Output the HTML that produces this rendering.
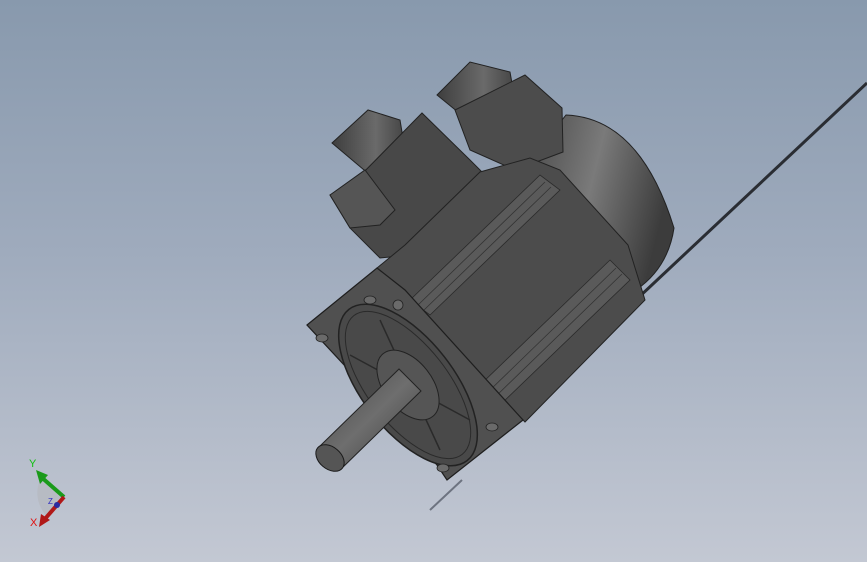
<!DOCTYPE html>
<html><head><style>
html,body{margin:0;padding:0;}
body{width:867px;height:562px;overflow:hidden;background:linear-gradient(180deg,#8899ad 0%,#9fabbd 45%,#c3c8d3 100%);font-family:"Liberation Sans",sans-serif;}
svg{position:absolute;left:0;top:0;}
</style></head><body>
<svg width="867" height="562" viewBox="0 0 867 562">
<defs>
<linearGradient id="enc" x1="0" y1="0" x2="1" y2="0.3">
<stop offset="0" stop-color="#4a4a4a"/><stop offset="0.5" stop-color="#7a7a7a"/><stop offset="1" stop-color="#3c3c3c"/>
</linearGradient>
<linearGradient id="sh" x1="0" y1="0" x2="1" y2="1">
<stop offset="0" stop-color="#454545"/><stop offset="0.5" stop-color="#6e6e6e"/><stop offset="1" stop-color="#3a3a3a"/>
</linearGradient>
<linearGradient id="cyl" x1="0" y1="0" x2="1" y2="0">
<stop offset="0" stop-color="#3e3e3e"/><stop offset="0.6" stop-color="#6a6a6a"/><stop offset="1" stop-color="#444"/>
</linearGradient>
</defs>
<line x1="867" y1="83" x2="638" y2="298" stroke="#2a2d33" stroke-width="3"/>
<line x1="430" y1="510" x2="462" y2="480" stroke="#6d7380" stroke-width="2"/>
<path d="M530,160 L566,115 Q640,118 674,228 Q668,268 636,290 L600,248 Z" fill="url(#enc)" stroke="#222" stroke-width="1"/>
<path d="M437,95 L470,62 L510,72 L515,100 L480,130 Z" fill="url(#cyl)" stroke="#222"/>
<path d="M455,110 L525,75 L562,108 L563,152 L515,170 L470,150 Z" fill="#4c4c4c" stroke="#222"/>
<path d="M332,143 L368,110 L400,120 L405,150 L370,175 Z" fill="url(#cyl)" stroke="#222"/>
<path d="M330,195 L356,180 L422,113 L470,160 L482,172 L400,256 L380,258 L350,228 Z" fill="#484848" stroke="#222"/>
<path d="M330,195 L350,228 L380,225 L395,210 L365,170 Z" fill="#555" stroke="#222"/>
<path d="M377,268 L405,245 L480,172 L530,158 L560,170 L628,245 L645,300 L525,422 Z" fill="#4c4c4c" stroke="#222"/>
<path d="M410,300 L540,175 L560,190 L430,315 Z" fill="#5a5a5a" stroke="#2a2a2a" stroke-width="0.8"/>
<path d="M480,385 L610,260 L630,280 L500,405 Z" fill="#5a5a5a" stroke="#2a2a2a" stroke-width="0.8"/>
<g stroke="#333" stroke-width="0.8">
<line x1="418" y1="305" x2="545" y2="182"/><line x1="424" y1="310" x2="551" y2="187"/>
<line x1="488" y1="392" x2="616" y2="268"/><line x1="494" y1="398" x2="622" y2="274"/>
</g>
<path d="M307,325 L377,268 L405,290 L523,420 L447,480 L437,465 Z" fill="#505050" stroke="#1e1e1e" stroke-width="1.2"/>
<ellipse cx="408" cy="385" rx="96" ry="46" transform="rotate(52 408 385)" fill="#494949" stroke="#222" stroke-width="1.5"/>
<ellipse cx="408" cy="385" rx="88" ry="40" transform="rotate(52 408 385)" fill="none" stroke="#2a2a2a" stroke-width="1"/>
<line x1="350" y1="355" x2="470" y2="420" stroke="#2a2a2a" stroke-width="1.5"/>
<line x1="380" y1="320" x2="440" y2="450" stroke="#2a2a2a" stroke-width="1.5"/>
<ellipse cx="408" cy="385" rx="40" ry="24" transform="rotate(52 408 385)" fill="#555" stroke="#222"/>
<g fill="#6a6a6a" stroke="#222" stroke-width="0.8">
<ellipse cx="370" cy="300" rx="6" ry="4"/><ellipse cx="322" cy="338" rx="6" ry="4"/>
<ellipse cx="492" cy="427" rx="6" ry="4"/><ellipse cx="443" cy="468" rx="6" ry="4"/>
<circle cx="398" cy="305" r="5"/>
</g>
<path d="M319,447 L399,369 L421,391 L341,469 Z" fill="url(#sh)" stroke="#222"/>
<ellipse cx="330" cy="458" rx="16" ry="11" transform="rotate(40 330 458)" fill="#555" stroke="#1a1a1a"/>
<path d="M40,480 L65,497 L48,518 Q32,500 40,480 Z" fill="#b7bbc3"/>
<line x1="40" y1="476" x2="64" y2="497" stroke="#1a9a1a" stroke-width="4"/>
<polygon points="36,470 48,475 40,484" fill="#1a9a1a"/>
<line x1="64" y1="497" x2="44" y2="520" stroke="#b01818" stroke-width="4"/>
<polygon points="39,527 41,514 50,520" fill="#b01818"/>
<circle cx="57" cy="505" r="3" fill="#2a2aa0"/>
<text x="29" y="467" font-size="11" fill="#10c010">Y</text>
<text x="30" y="526" font-size="11" fill="#e01010">X</text>
<text x="48" y="504" font-size="8" fill="#3030c0">Z</text>
</svg>
</body></html>
